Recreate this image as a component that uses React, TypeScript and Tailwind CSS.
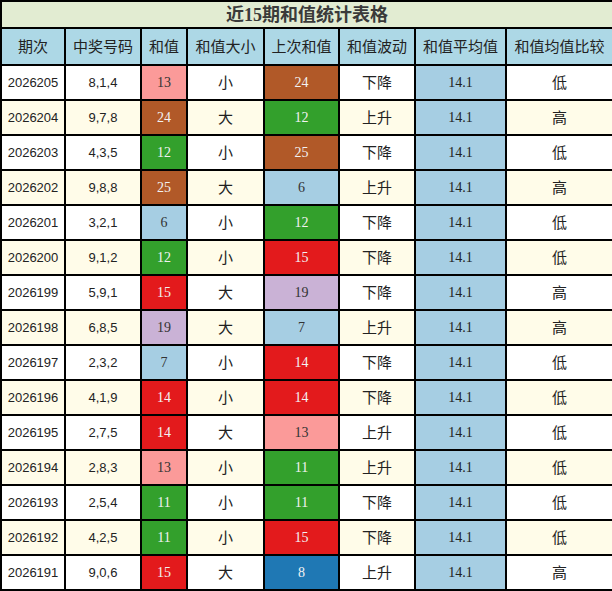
import React from 'react';

type Row = {
  period: string;
  nums: string;
  sum: number;
  size: string;
  prev: number;
  trend: string;
  cmp: string;
};

const rows: Row[] = [
  { period: '2026205', nums: '8,1,4', sum: 13, size: '小', prev: 24, trend: '下降', cmp: '低' },
  { period: '2026204', nums: '9,7,8', sum: 24, size: '大', prev: 12, trend: '上升', cmp: '高' },
  { period: '2026203', nums: '4,3,5', sum: 12, size: '小', prev: 25, trend: '下降', cmp: '低' },
  { period: '2026202', nums: '9,8,8', sum: 25, size: '大', prev: 6, trend: '上升', cmp: '高' },
  { period: '2026201', nums: '3,2,1', sum: 6, size: '小', prev: 12, trend: '下降', cmp: '低' },
  { period: '2026200', nums: '9,1,2', sum: 12, size: '小', prev: 15, trend: '下降', cmp: '低' },
  { period: '2026199', nums: '5,9,1', sum: 15, size: '大', prev: 19, trend: '下降', cmp: '高' },
  { period: '2026198', nums: '6,8,5', sum: 19, size: '大', prev: 7, trend: '上升', cmp: '高' },
  { period: '2026197', nums: '2,3,2', sum: 7, size: '小', prev: 14, trend: '下降', cmp: '低' },
  { period: '2026196', nums: '4,1,9', sum: 14, size: '小', prev: 14, trend: '下降', cmp: '低' },
  { period: '2026195', nums: '2,7,5', sum: 14, size: '大', prev: 13, trend: '上升', cmp: '低' },
  { period: '2026194', nums: '2,8,3', sum: 13, size: '小', prev: 11, trend: '上升', cmp: '低' },
  { period: '2026193', nums: '2,5,4', sum: 11, size: '小', prev: 11, trend: '下降', cmp: '低' },
  { period: '2026192', nums: '4,2,5', sum: 11, size: '小', prev: 15, trend: '下降', cmp: '低' },
  { period: '2026191', nums: '9,0,6', sum: 15, size: '大', prev: 8, trend: '上升', cmp: '高' },
];

// 和值 -> 单元格配色
const sumClass = (v: number) => {
  if (v <= 7) return 'bg-[#a6cee3] text-[#333]';
  if (v === 8) return 'bg-[#1f78b4] text-[#f2f2f2]';
  if (v <= 12) return 'bg-[#33a02c] text-[#f2f2f2]';
  if (v === 13) return 'bg-[#fb9a99] text-[#333]';
  if (v <= 15) return 'bg-[#e31a1c] text-[#f2f2f2]';
  if (v <= 19) return 'bg-[#cab2d6] text-[#333]';
  return 'bg-[#b15928] text-[#f2f2f2]';
};

const headers = ['期次', '中奖号码', '和值', '和值大小', '上次和值', '和值波动', '和值平均值', '和值均值比较'];
const widths = ['w-[64px]', 'w-[76px]', 'w-[46px]', 'w-[77px]', 'w-[75px]', 'w-[76px]', 'w-[91px]', 'w-[107px]'];

const cjk = "font-['Noto_Sans_CJK_SC',sans-serif]";
const serif = "font-['Liberation_Serif',serif]";
const sans = "font-['Liberation_Sans',sans-serif]";

const App: React.FC = () => {
  return (
    <div className="w-[612px] h-[591px] bg-white overflow-hidden">
      <table className="w-[612px] table-fixed border-collapse text-center text-[#222]">
        <colgroup>
          {widths.map((w, i) => (
            <col key={i} className={w} />
          ))}
        </colgroup>
        <thead>
          <tr className="h-[27px]">
            <th
              colSpan={8}
              className="border-2 border-black bg-[#e2ecd2] p-0 text-[18px] leading-[24px] font-bold text-[#3a3a3a] font-['Liberation_Serif','Noto_Sans_CJK_SC',serif]"
            >
              近15期和值统计表格
            </th>
          </tr>
          <tr className="h-[37px]">
            {headers.map((h) => (
              <th key={h} className={`border-2 border-black bg-[#add8e6] p-0 text-[15px] font-normal ${cjk}`}>
                {h}
              </th>
            ))}
          </tr>
        </thead>
        <tbody>
          {rows.map((r, i) => {
            const bg = i % 2 === 0 ? 'bg-white' : 'bg-[#fffce9]';
            return (
              <tr key={r.period} className="h-[35px]">
                <td className={`border-2 border-black p-0 text-[13px] ${bg} ${sans}`}>{r.period}</td>
                <td className={`border-2 border-black p-0 text-[13px] ${bg} ${sans}`}>{r.nums}</td>
                <td className={`border-2 border-black p-0 text-[14px] ${sumClass(r.sum)} ${serif}`}>{r.sum}</td>
                <td className={`border-2 border-black p-0 text-[15px] ${bg} ${cjk}`}>{r.size}</td>
                <td className={`border-2 border-black p-0 text-[14px] ${sumClass(r.prev)} ${serif}`}>{r.prev}</td>
                <td className={`border-2 border-black p-0 text-[15px] ${bg} ${cjk}`}>{r.trend}</td>
                <td className={`border-2 border-black p-0 text-[14px] bg-[#a6cee3] ${serif}`}>14.1</td>
                <td className={`border-2 border-black p-0 text-[15px] ${bg} ${cjk}`}>{r.cmp}</td>
              </tr>
            );
          })}
        </tbody>
      </table>
    </div>
  );
};

export default App;
